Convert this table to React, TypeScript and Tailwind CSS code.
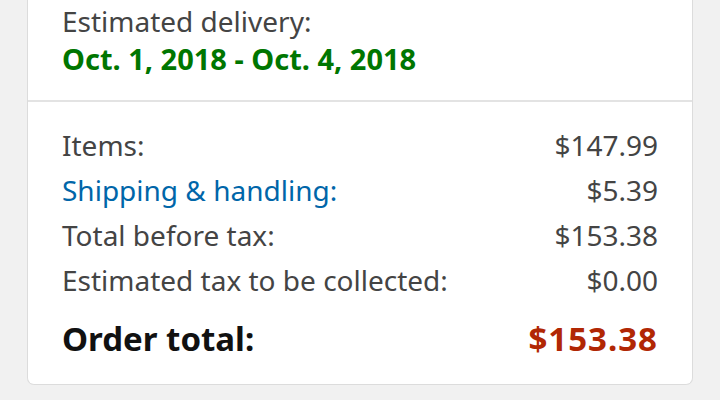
export default function App() {
  const rows = [
    { label: "Items:", value: "$147.99" },
    { label: "Shipping & handling:", value: "$5.39", link: true },
    { label: "Total before tax:", value: "$153.38" },
    { label: "Estimated tax to be collected:", value: "$0.00" },
  ]

  return (
    <div
      className="h-[400px] w-[720px] overflow-hidden bg-[#f1f1f1] px-[27px]"
      style={{ fontFamily: '"Noto Sans", Arial, sans-serif' }}
    >
      <div className="rounded-b-[7px] border-x border-b border-[#dcdcdc] bg-white">
        <div className="px-[34px] pb-[22px] pt-[2px]">
          <div className="text-[28px] leading-[38px] text-[#444]">Estimated delivery:</div>
          <div className="text-[29px] font-bold leading-[38px] text-[#007600]">
            Oct. 1, 2018 - Oct. 4, 2018
          </div>
        </div>
        <div className="border-t-2 border-[#e3e3e3] px-[34px] pb-[23px] pt-[21px]">
          {rows.map((r) => (
            <div key={r.label} className="flex items-center justify-between text-[28px] leading-[45px]">
              <span className={r.link ? "text-[#0066a9]" : "text-[#444]"}>{r.label}</span>
              <span className="text-[#444]">{r.value}</span>
            </div>
          ))}
          <div className="mt-[14px] flex items-center justify-between text-[33px] font-bold leading-[44px]">
            <span className="text-[#111]">Order total:</span>
            <span className="tracking-[1px] text-[#b12704]">$153.38</span>
          </div>
        </div>
      </div>
    </div>
  )
}
